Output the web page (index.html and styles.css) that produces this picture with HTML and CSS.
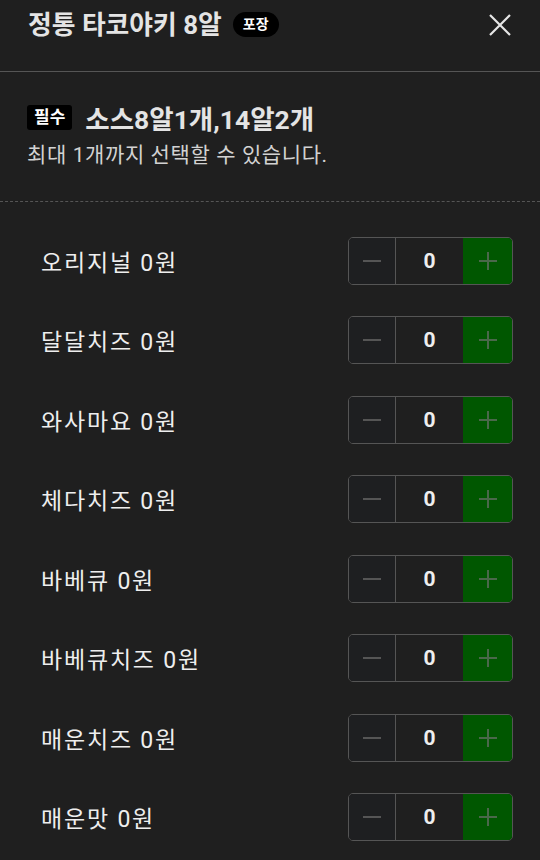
FILE: index.html
```html
<!DOCTYPE html>
<html lang="ko">
<head>
    <meta charset="UTF-8">
    <meta name="viewport" content="width=device-width, initial-scale=1.0">
    <title>정통 타코야키 8알</title>
    <link rel="stylesheet" href="styles.css">
</head>
<body>
    <header class="sheet-header">
        <h1 class="title">정통 타코야키 8알</h1>
        <span class="pill">포장</span>
        <button class="close" aria-label="닫기">
            <svg width="22" height="22" viewBox="0 0 22 22">
                <path d="M1 1 L21 21 M21 1 L1 21" stroke="#e6e6e6" stroke-width="2.2" fill="none"/>
            </svg>
        </button>
    </header>

    <section class="group-head">
        <div class="group-title">
            <span class="required">필수</span>
            <h2>소스8알1개,14알2개</h2>
        </div>
        <p class="hint">최대 1개까지 선택할 수 있습니다.</p>
    </section>

    <ul class="options">
        <li class="option">
            <span class="name">오리지널 0원</span>
            <div class="stepper">
                <button class="minus"><span></span></button>
                <span class="count">0</span>
                <button class="plus"><span></span></button>
            </div>
        </li>
        <li class="option">
            <span class="name">달달치즈 0원</span>
            <div class="stepper">
                <button class="minus"><span></span></button>
                <span class="count">0</span>
                <button class="plus"><span></span></button>
            </div>
        </li>
        <li class="option">
            <span class="name">와사마요 0원</span>
            <div class="stepper">
                <button class="minus"><span></span></button>
                <span class="count">0</span>
                <button class="plus"><span></span></button>
            </div>
        </li>
        <li class="option">
            <span class="name">체다치즈 0원</span>
            <div class="stepper">
                <button class="minus"><span></span></button>
                <span class="count">0</span>
                <button class="plus"><span></span></button>
            </div>
        </li>
        <li class="option">
            <span class="name">바베큐 0원</span>
            <div class="stepper">
                <button class="minus"><span></span></button>
                <span class="count">0</span>
                <button class="plus"><span></span></button>
            </div>
        </li>
        <li class="option">
            <span class="name">바베큐치즈 0원</span>
            <div class="stepper">
                <button class="minus"><span></span></button>
                <span class="count">0</span>
                <button class="plus"><span></span></button>
            </div>
        </li>
        <li class="option">
            <span class="name">매운치즈 0원</span>
            <div class="stepper">
                <button class="minus"><span></span></button>
                <span class="count">0</span>
                <button class="plus"><span></span></button>
            </div>
        </li>
        <li class="option">
            <span class="name">매운맛 0원</span>
            <div class="stepper">
                <button class="minus"><span></span></button>
                <span class="count">0</span>
                <button class="plus"><span></span></button>
            </div>
        </li>
    </ul>
</body>
</html>
```

FILE: styles.css
```css
* {
    margin: 0;
    padding: 0;
    box-sizing: border-box;
}

body {
    font-family: Roboto, "Noto Sans CJK KR", sans-serif;
    background-color: #1f1f1f;
    color: #e6e6e6;
    overflow: hidden;
}

.sheet-header {
    display: flex;
    align-items: center;
    height: 72px;
    padding: 0 28px 22px 28px;
    border-bottom: 1px solid #555;
}

.title {
    font-size: 25.8px;
    font-weight: bold;
    line-height: 30px;
    color: #e4e4e4;
}

.pill {
    margin-left: 11px;
    background-color: #000;
    color: #fff;
    font-size: 14px;
    font-weight: bold;
    line-height: 25px;
    height: 25px;
    padding: 0 10px;
    border-radius: 13px;
}

.close {
    margin-left: auto;
    background: none;
    border: none;
    width: 22px;
    height: 22px;
    margin-right: 1px;
    display: flex;
}

.group-head {
    padding: 30px 27px 34px 27px;
    border-bottom: 1px dashed #555;
}

.group-title {
    display: flex;
    align-items: center;
    height: 30px;
}

.required {
    background-color: #000;
    color: #fff;
    font-size: 17px;
    font-weight: bold;
    line-height: 25px;
    padding: 0 7px;
    border-radius: 3px;
}

.group-title h2 {
    margin-left: 13px;
    font-size: 26.5px;
    font-weight: bold;
    color: #e4e4e4;
}

.hint {
    margin-top: 11px;
    font-size: 21px;
    line-height: 24px;
    letter-spacing: 0.6px;
    color: #d2d2d2;
}

.options {
    list-style: none;
    padding-top: 19px;
}

.option {
    display: flex;
    align-items: center;
    justify-content: space-between;
    height: 79.5px;
    padding: 0 27px 0 41px;
}

.name {
    font-size: 23px;
    letter-spacing: 1.8px;
    color: #eeeeee;
}

.stepper {
    display: flex;
    height: 48px;
    border: 1px solid #555;
    border-radius: 5px;
    overflow: hidden;
}

.stepper button {
    border: none;
    display: flex;
    align-items: center;
    justify-content: center;
}

.minus {
    width: 47px;
    background-color: #1e1f21;
    border-right: 1px solid #555 !important;
}

.minus span {
    width: 18px;
    height: 2px;
    background-color: #555;
}

.count {
    width: 67px;
    text-align: center;
    line-height: 46px;
    font-size: 21px;
    font-weight: bold;
    color: #eee;
}

.plus {
    width: 49px;
    background-color: #005700;
}

.plus span {
    width: 18px;
    height: 2px;
    background-color: #4a684a;
    position: relative;
}

.plus span::after {
    content: "";
    position: absolute;
    left: 8px;
    top: -8px;
    width: 2px;
    height: 18px;
    background-color: #4a684a;
}
```
